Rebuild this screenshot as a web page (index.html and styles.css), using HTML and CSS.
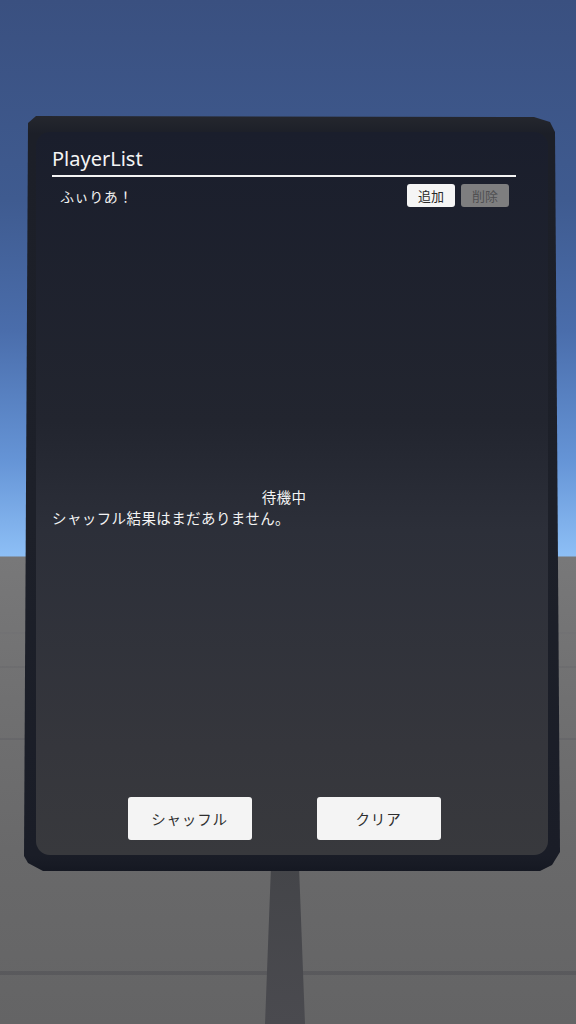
FILE: index.html
```html
<!DOCTYPE html>
<html lang="ja">
<head>
<meta charset="utf-8">
<title>PlayerList</title>
<link rel="stylesheet" href="styles.css">
</head>
<body>
<div class="scene">
  <div class="stand"></div>
  <div class="frame">
    <div class="panel">
      <div class="title">PlayerList</div>
      <div class="rule"></div>
      <div class="player-row">
        <span class="player-name">ふぃりあ！</span>
        <div class="row-actions">
          <button class="small-btn">追加</button>
          <button class="small-btn disabled">削除</button>
        </div>
      </div>
      <div class="status-area">
        <div class="status">待機中</div>
        <div class="result">シャッフル結果はまだありません。</div>
      </div>
      <div class="actions">
        <button class="big-btn">シャッフル</button>
        <button class="big-btn">クリア</button>
      </div>
    </div>
  </div>
</div>
</body>
</html>
```

FILE: styles.css
```css
html, body {
  margin: 0;
  padding: 0;
}
body {
  width: 576px;
  height: 1024px;
  overflow: hidden;
  font-family: "Noto Sans", "Noto Sans CJK JP", sans-serif;
}
.scene {
  position: relative;
  width: 576px;
  height: 1024px;
  box-sizing: border-box;
  padding-top: 116px;
  padding-left: 24px;
  background:
    linear-gradient(180deg, transparent 971px, rgba(80,80,84,0.55) 971px, rgba(80,80,84,0.55) 975px, transparent 975px),
    linear-gradient(180deg, transparent 738px, rgba(95,95,100,0.45) 738px, rgba(95,95,100,0.45) 740px, transparent 740px),
    linear-gradient(180deg, transparent 666px, rgba(100,100,104,0.35) 666px, rgba(100,100,104,0.35) 668px, transparent 668px),
    linear-gradient(180deg, transparent 632px, rgba(110,110,114,0.35) 632px, rgba(110,110,114,0.35) 634px, transparent 634px),
    linear-gradient(180deg,
      #3a5080 0px,
      #3f5b90 200px,
      #4a6dab 330px,
      #6594d6 460px,
      #8dbff6 556px,
      #787879 557px,
      #707071 700px,
      #69696a 850px,
      #646465 1024px);
}
.stand {
  position: absolute;
  left: 264px;
  top: 866px;
  width: 42px;
  height: 158px;
  background: linear-gradient(180deg, #444549, #4a4a4f);
  clip-path: polygon(7px 0, 35px 0, 41px 100%, 1px 100%);
}
.frame {
  position: relative;
  width: 536px;
  height: 755px;
  box-sizing: border-box;
  padding: 16px 12px;
  background: linear-gradient(180deg, #25272e 0px, #1c1f28 18px, #1d2029 400px, #1a1d27 740px, #151822 755px);
  clip-path: polygon(12px 0, 510px 1px, 526px 6px, 531px 16px, 536px 736px, 528px 749px, 516px 755px, 19px 755px, 4px 747px, 0 740px, 4px 7px);
}
.panel {
  height: 100%;
  box-sizing: border-box;
  border-radius: 14px;
  padding: 15px 32px 15px 16px;
  display: flex;
  flex-direction: column;
  background: linear-gradient(180deg, #1a1e2c 0%, #22252f 40%, #2c2f39 55%, #35363c 85%, #38393d 100%);
  color: #ffffff;
}
.title {
  font-size: 20px;
  line-height: 24px;
  color: #f4f4f4;
}
.rule {
  height: 2px;
  margin-top: 4px;
  background: #f4f4f4;
}
.player-row {
  margin-top: 7px;
  display: flex;
  align-items: center;
  justify-content: space-between;
  padding: 0 7px 0 8px;
  height: 23px;
}
.player-name {
  font-size: 14px;
  letter-spacing: 0.6px;
  color: #f2f2f2;
}
.row-actions {
  display: flex;
  gap: 6px;
}
.small-btn {
  width: 48px;
  height: 23px;
  padding: 0;
  border: none;
  border-radius: 3px;
  background: #f5f5f5;
  color: #2a2a2a;
  font-family: "Noto Sans CJK JP", sans-serif;
  font-size: 13px;
  line-height: 23px;
}
.small-btn.disabled {
  background: #7e7e7f;
  color: #505052;
}
.status-area {
  flex: 1;
  display: flex;
  flex-direction: column;
  justify-content: center;
  padding-top: 12px;
  font-size: 14.5px;
  line-height: 21px;
  letter-spacing: 0.4px;
  color: #f4f4f4;
}
.status {
  text-align: center;
}
.result {
  text-align: left;
}
.actions {
  display: flex;
  justify-content: center;
  gap: 65px;
}
.big-btn {
  width: 124px;
  height: 43px;
  padding: 0;
  border: none;
  border-radius: 3px;
  background: #f4f4f4;
  color: #2e2e2e;
  font-family: "Noto Sans CJK JP", sans-serif;
  font-size: 14.5px;
  letter-spacing: 0.8px;
}
```
